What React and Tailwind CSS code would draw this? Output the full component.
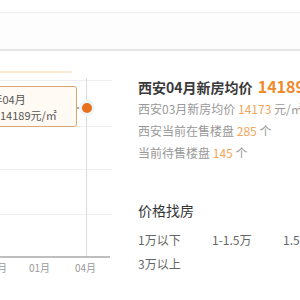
const FONT = { fontFamily: '"Noto Sans CJK SC", "Noto Sans", sans-serif' }

const STATS = [
  { label: '西安03月新房均价', value: '14173', unit: '元/㎡' },
  { label: '西安当前在售楼盘', value: '285', unit: '个' },
  { label: '当前待售楼盘', value: '145', unit: '个' },
]

const PRICES = ['1万以下', '1-1.5万', '1.5-2万', '3万以上']

function PriceChart() {
  return (
    <div className="relative w-[112px] h-[230px] shrink-0">
      <svg width="112" height="230" className="block">
        <line x1="0" y1="29.5" x2="112" y2="29.5" stroke="#eeeeee" />
        <line x1="0" y1="75.5" x2="112" y2="75.5" stroke="#eeeeee" />
        <line x1="0" y1="118.5" x2="112" y2="118.5" stroke="#eeeeee" />
        <line x1="0" y1="163.5" x2="112" y2="163.5" stroke="#eeeeee" />
        <line x1="86.5" y1="27" x2="86.5" y2="206" stroke="#dcdcdc" />
        <line x1="0" y1="206" x2="110" y2="206" stroke="#a8a8a8" strokeWidth="1.5" />
        <line x1="0" y1="21" x2="72" y2="21" stroke="#fde9d0" strokeWidth="2" />
        <line x1="76" y1="57" x2="84" y2="57" stroke="#555555" />
        <circle cx="87" cy="57" r="8" fill="#eef6fb" />
        <circle cx="87" cy="57" r="5" fill="#e8701c" />
      </svg>

      {/* tooltip for the hovered month */}
      <div className="absolute left-[-43px] top-[35px] w-[120px] h-[41px] rounded-[3px] border border-[#d6a674] bg-[#fffaf3] pl-[9px] pt-[4px] text-[11px] leading-[16px] text-[#555]">
        <div>2018年04月</div>
        <div>均价：14189元/㎡</div>
      </div>

      <div className="absolute top-[210px] left-0 w-full text-[10px] leading-[14px] text-[#999]">
        <span className="absolute left-[-14px]">10月</span>
        <span className="absolute left-[29px]">01月</span>
        <span className="absolute left-[75px]">04月</span>
      </div>
    </div>
  )
}

export default function App() {
  return (
    <div className="w-[300px] h-[300px] overflow-hidden bg-white" style={FONT}>
      <div className="h-[12px]" />
      <div className="h-[39px] border-t border-[#efefef] border-b-2 border-b-[#e6e6e6] bg-[#fdfdfd]" />

      <div className="flex">
        <PriceChart />

        <div className="ml-[26px] pt-[25px] whitespace-nowrap">
          <div className="text-[14px] leading-[20px] font-bold text-[#3a3a3a]">
            西安04月新房均价 <span className="ml-[2px] text-[16px] text-[#f08a2a]">14189</span>
          </div>

          <div className="mt-[1px] text-[12px] leading-[22px] text-[#999]">
            {STATS.map(s => (
              <div key={s.label}>
                {s.label} <span className="text-[#f2a65a]">{s.value}</span> {s.unit}
              </div>
            ))}
          </div>

          <div className="mt-[36px] text-[14px] leading-[20px] text-[#333]">价格找房</div>

          <div className="mt-[10px] grid grid-cols-[74px_71px_74px] gap-y-[4px] text-[12px] leading-[20px] text-[#666]">
            {PRICES.map(p => (
              <div key={p}>{p}</div>
            ))}
          </div>
        </div>
      </div>
    </div>
  )
}
